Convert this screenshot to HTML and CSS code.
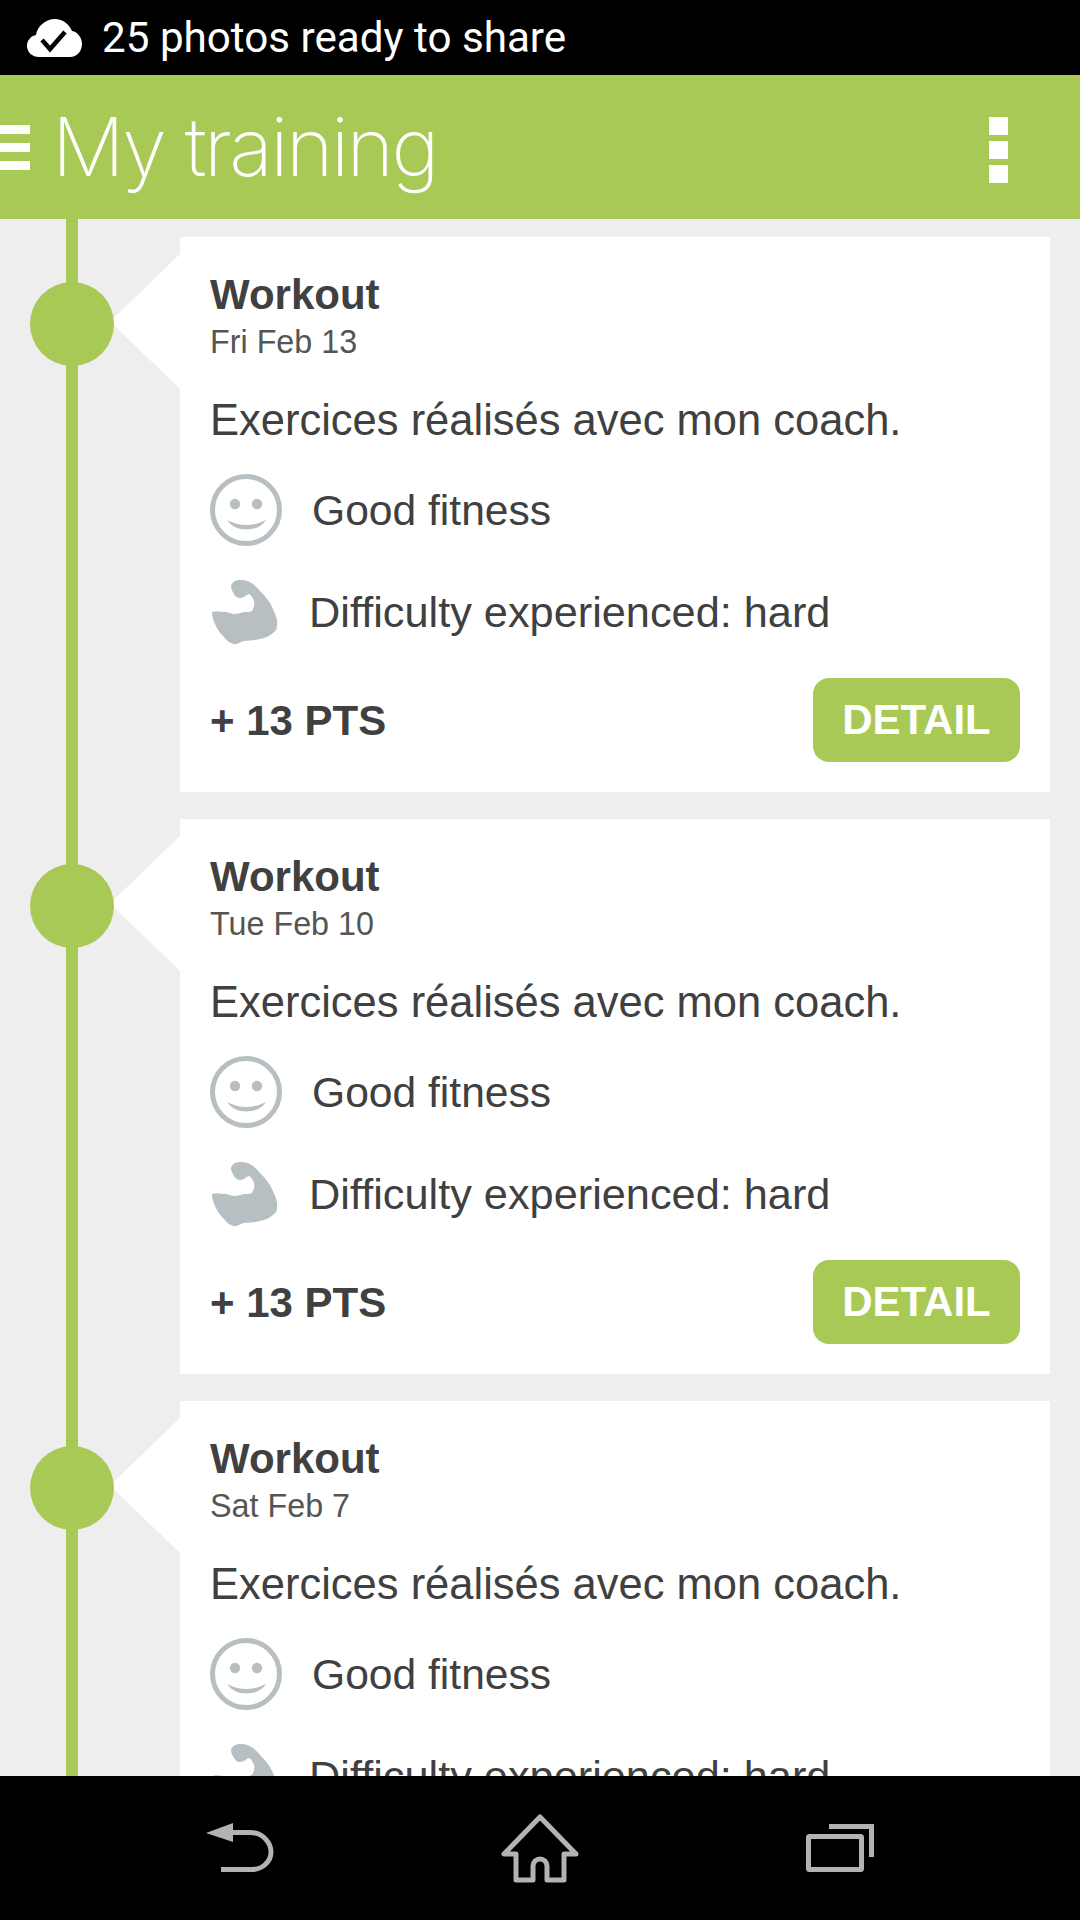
FILE: index.html
```html
<!DOCTYPE html>
<html lang="en">
<head>
<meta charset="UTF-8">
<title>My training</title>
<link rel="stylesheet" href="styles.css">
</head>
<body>

<svg class="defs" width="0" height="0">
  <symbol id="smile" viewBox="0 0 72 72">
    <circle cx="36" cy="36" r="33.5" fill="none" stroke="#b8bfc3" stroke-width="5"/>
    <circle cx="25" cy="30" r="5.2" fill="#b8bfc3"/>
    <circle cx="47" cy="30" r="5.2" fill="#b8bfc3"/>
    <path d="M17 46 Q36 56 56 46 Q50 55.5 36.5 55.5 Q23 55.5 17 46Z" fill="#b8bfc3"/>
  </symbol>
  <symbol id="muscle" viewBox="0 0 66 66">
    <path d="M28 1 C37 0 43 6 48 12 C54 18 58 23 60 28 C63 35 66 40 65 46 C65 50 64 52 62 53 C58 57 53 59 48 60 C42 62 37 61 32 62 C28 63 25 66 22 65 C17 64 14 61 12 58 C8 54 5 50 3 45 C1 41 0 37 0 33 C3 32 7 32 10 33 C14 32 18 35 22 35 C25 35 28 34 32 33 C35 33 38 33 40 32 C42 28 43 25 42 22 C41 19 39 16 37 15 C34 16 32 19 28 19 C25 19 23 17 22 15 C20 12 19 9 19 7 C20 3 24 1 28 1Z" fill="#b8bfc3"/>
  </symbol>
</svg>

<div class="status">
  <svg class="cloud" width="55" height="38" viewBox="0 0 55 38">
    <path d="M12 38 C4 38 0 32 0 27 C0 21 4 17 9 16 C10 7 19 0 28 0 C36 0 42 5 45 12 C51 13 55 19 55 25 C55 32 50 38 43 38Z" fill="#fff"/>
    <path d="M15 21 L23 30 L38 13" fill="none" stroke="#000" stroke-width="4.5"/>
  </svg>
  <span>25 photos ready to share</span>
</div>

<header class="topbar">
  <div class="burger"><i></i><i></i><i></i></div>
  <h1>My training</h1>
  <div class="kebab"><i></i><i></i><i></i></div>
</header>

<main class="feed">

  <article class="card">
    <h2>Workout</h2>
    <div class="date">Fri Feb 13</div>
    <p class="note">Exercices réalisés avec mon coach.</p>
    <div class="stat stat-fitness"><svg width="72" height="72"><use href="#smile"/></svg><span>Good fitness</span></div>
    <div class="stat stat-effort"><svg width="66" height="66"><use href="#muscle"/></svg><span>Difficulty experienced: hard</span></div>
    <div class="foot">
      <strong>+ 13 PTS</strong>
      <button class="detail">DETAIL</button>
    </div>
  </article>

  <article class="card">
    <h2>Workout</h2>
    <div class="date">Tue Feb 10</div>
    <p class="note">Exercices réalisés avec mon coach.</p>
    <div class="stat stat-fitness"><svg width="72" height="72"><use href="#smile"/></svg><span>Good fitness</span></div>
    <div class="stat stat-effort"><svg width="66" height="66"><use href="#muscle"/></svg><span>Difficulty experienced: hard</span></div>
    <div class="foot">
      <strong>+ 13 PTS</strong>
      <button class="detail">DETAIL</button>
    </div>
  </article>

  <article class="card">
    <h2>Workout</h2>
    <div class="date">Sat Feb 7</div>
    <p class="note">Exercices réalisés avec mon coach.</p>
    <div class="stat stat-fitness"><svg width="72" height="72"><use href="#smile"/></svg><span>Good fitness</span></div>
    <div class="stat stat-effort"><svg width="66" height="66"><use href="#muscle"/></svg><span>Difficulty experienced: hard</span></div>
    <div class="foot">
      <strong>+ 13 PTS</strong>
      <button class="detail">DETAIL</button>
    </div>
  </article>

</main>

<nav class="navbar">
  <svg width="68" height="50" viewBox="0 0 68 50">
    <path d="M0 10 L27 0 V19Z" fill="#b3b3b3"/>
    <path d="M24 9.5 H44 C57 9.5 65 20 65 29 C65 39 56 46.5 46 46.5 H15" fill="none" stroke="#b3b3b3" stroke-width="5"/>
  </svg>
  <svg width="78" height="70" viewBox="0 0 78 70">
    <path d="M39 4 L3 41 H15 V67 H32 V53 A7 7 0 0 1 46 53 V67 H63 V41 H75Z" fill="none" stroke="#b3b3b3" stroke-width="5" stroke-linejoin="round"/>
  </svg>
  <svg width="68" height="48" viewBox="0 0 68 48">
    <rect x="2.5" y="12.5" width="53" height="33" rx="1" fill="none" stroke="#b3b3b3" stroke-width="5"/>
    <path d="M23 2.5 H65.5 V33" fill="none" stroke="#b3b3b3" stroke-width="5"/>
  </svg>
</nav>

</body>
</html>
```

FILE: styles.css
```css
* {
  box-sizing: border-box;
}
body {
  margin: 0;
  width: 1080px;
  height: 1920px;
  display: flex;
  flex-direction: column;
  overflow: hidden;
  font-family: "Liberation Sans", Arial, sans-serif;
  background: #eee;
  color: #404040;
}
.defs {
  position: absolute;
}

.status {
  height: 75px;
  flex: none;
  display: flex;
  align-items: center;
  gap: 20px;
  padding-left: 27px;
  background: #000;
  color: #fff;
  font-family: Roboto, sans-serif;
  font-size: 42.2px;
}
.cloud {
  flex: none;
}

.topbar {
  height: 144px;
  flex: none;
  display: flex;
  align-items: center;
  background: #a9c956;
  color: #fff;
}
.topbar h1 {
  margin: 0 0 0 22px;
  flex: 1;
  font-family: Inter, sans-serif;
  font-size: 81px;
  font-weight: 150;
  letter-spacing: -2.5px;
}
.burger i {
  display: block;
  width: 30px;
  height: 9px;
  margin-bottom: 9px;
  background: #fff;
}
.burger i:last-child {
  margin-bottom: 0;
}
.kebab {
  margin: 6px 72px 0 0;
}
.kebab i {
  display: block;
  width: 19px;
  height: 18px;
  margin-bottom: 6px;
  background: #fff;
}
.kebab i:last-child {
  margin-bottom: 0;
}

.feed {
  position: relative;
  flex: 1;
  min-height: 0;
  overflow: hidden;
  padding: 18px 30px 0 180px;
  display: flex;
  flex-direction: column;
  gap: 27px;
}
/* timeline rail */
.feed::before {
  content: "";
  position: absolute;
  left: 66px;
  top: 0;
  bottom: 0;
  width: 12px;
  background: #a9c956;
}
.card {
  position: relative;
  flex: none;
  height: 555px;
  padding: 35px 30px 0;
  background: #fff;
}
.card::before {
  content: "";
  position: absolute;
  left: -70px;
  top: 17px;
  width: 70px;
  height: 135px;
  background: #fff;
  clip-path: polygon(100% 0, 0 50%, 100% 100%);
}
.card::after {
  content: "";
  position: absolute;
  left: -150px;
  top: 45px;
  width: 84px;
  height: 84px;
  border-radius: 50%;
  background: #a9c956;
}
.card h2 {
  margin: 0;
  font-size: 42px;
  line-height: 46px;
}
.date {
  margin-top: 4px;
  font-size: 32.3px;
  line-height: 40px;
  color: #555;
}
.note {
  margin: 34px 0 0;
  font-size: 43.5px;
  line-height: 48px;
}
.stat {
  display: flex;
  align-items: center;
}
.stat-fitness {
  margin-top: 30px;
  gap: 30px;
  font-size: 42.6px;
}
.stat-effort {
  margin-top: 33px;
  gap: 31px;
  padding-left: 2px;
  font-size: 43.3px;
}
.foot {
  margin-top: 33px;
  display: flex;
  justify-content: space-between;
  align-items: center;
}
.foot strong {
  font-size: 42px;
  padding-top: 2px;
}
.detail {
  width: 207px;
  height: 84px;
  padding: 0;
  border: none;
  border-radius: 16px;
  background: #a9c956;
  color: #fff;
  font-family: "Liberation Sans", Arial, sans-serif;
  font-size: 42px;
  font-weight: bold;
}

.navbar {
  height: 144px;
  flex: none;
  position: relative;
  display: grid;
  grid-template-columns: repeat(3, 300px);
  justify-content: center;
  justify-items: center;
  align-items: center;
  background: #000;
}
```
